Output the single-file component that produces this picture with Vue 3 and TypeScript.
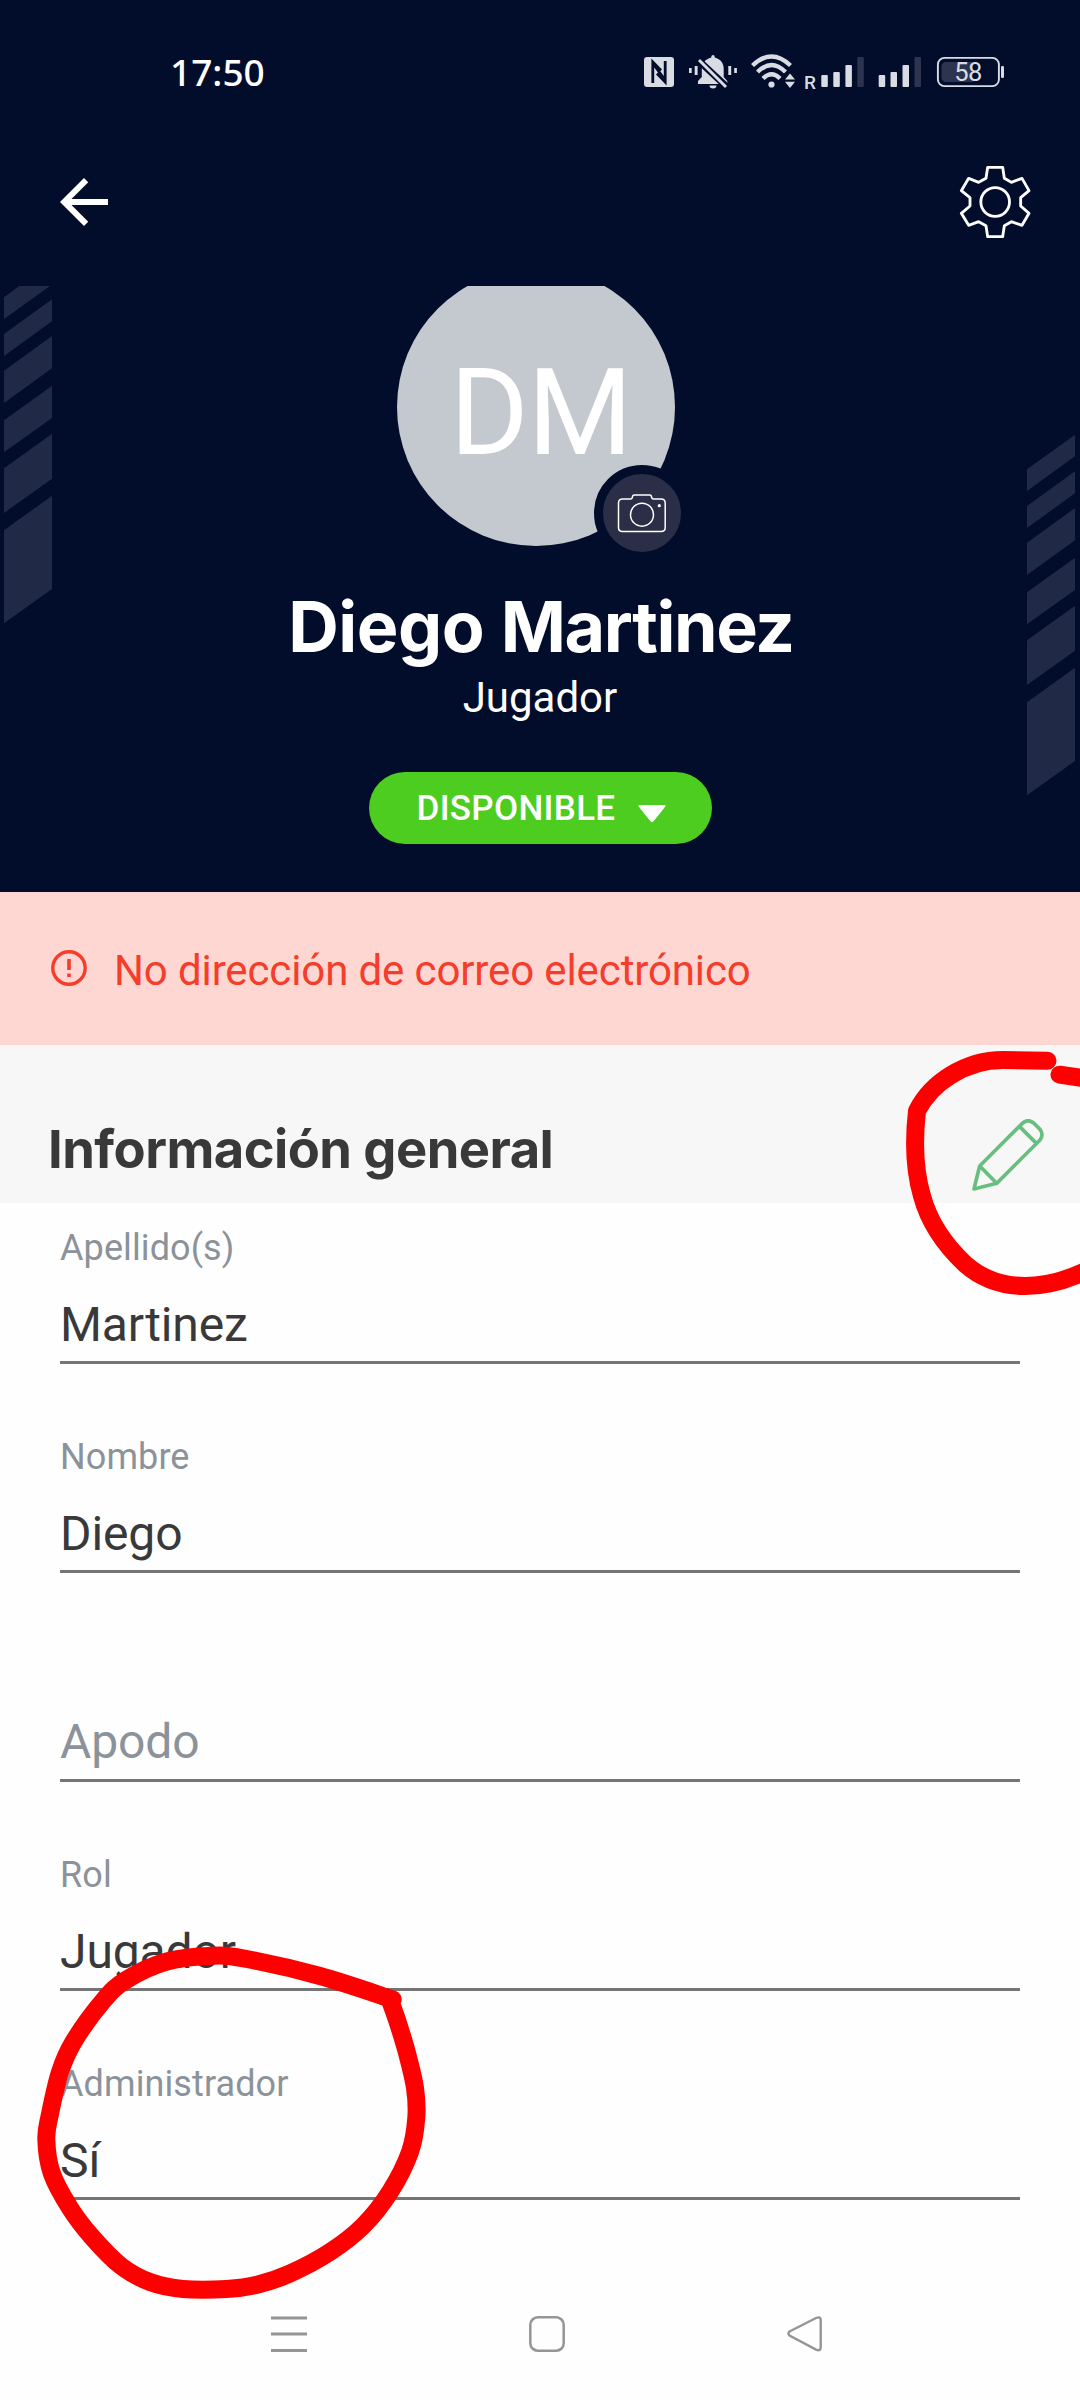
<script setup lang="ts">
interface Field {
  label: string
  value: string
}

type Point = [number, number]

const fields: Field[] = [
  { label: 'Apellido(s)', value: 'Martinez' },
  { label: 'Nombre', value: 'Diego' },
  { label: 'Apodo', value: '' },
  { label: 'Rol', value: 'Jugador' },
  { label: 'Administrador', value: 'Sí' },
]

// Smooth curve through a list of points
function smooth(pts: Point[]): string {
  let d = `M${pts[0][0]} ${pts[0][1]}`
  for (let i = 0; i < pts.length - 1; i++) {
    const a = pts[Math.max(i - 1, 0)]
    const b = pts[i]
    const c = pts[i + 1]
    const e = pts[Math.min(i + 2, pts.length - 1)]
    d += `C${b[0] + (c[0] - a[0]) / 6} ${b[1] + (c[1] - a[1]) / 6} ${c[0] - (e[0] - b[0]) / 6} ${c[1] - (e[1] - b[1]) / 6} ${c[0]} ${c[1]}`
  }
  return d
}

const marks: string[] = [
  'M1047.5 1060.8L1003 1060C965 1060 931 1083 917 1111C913 1146 915 1172 922 1196C929 1222 946 1246 965 1264C982 1279 1003 1286 1025 1286C1047 1286 1068 1280 1090 1269',
  'M1059.5 1074.7L1090 1079',
  smooth([[392.7, 1999.3], [320, 1976], [246.7, 1959], [213, 1955.7], [166.7, 1961.5], [126, 1980], [103, 2001], [74, 2041], [60, 2072], [50, 2114], [46.3, 2139], [51.7, 2173], [70, 2208], [92, 2237], [121, 2266], [150, 2282], [183, 2289], [226.7, 2289], [258, 2284.5], [290, 2273.5], [330, 2252], [363, 2226], [390, 2192], [410, 2152], [416.3, 2118], [415, 2088], [407, 2053], [398, 2023], [391, 2003]]),
]
</script>

<template>
  <div class="screen">
    <header class="top">
      <div class="status">
        <span class="time">17:50</span>
        <div class="tray">
          <svg class="tray-icons" width="364" height="40" viewBox="640 52 364 40">
            <g fill="#dadce4">
              <rect x="644" y="57" width="30" height="30" rx="3" />
              <path d="M689 68h2.700v5h-2.700zM694.700 66h2.900v9h-2.900zM728.300 66h2.900v9h-2.900zM734.200 68h2.700v5h-2.700z" />
              <path d="M711.300 57.500V56.800a1.700 1.700 0 0 1 3.400 0v.7c6 1.500 9 6 9 11.500v8l3.600 4v3H698v-3l3.800-4v-8c0-5.500 3.500-10 9.500-11.500z" />
              <path d="M709.500 85.500h7a3.500 3 0 0 1-7 0z" />
              <circle cx="771.500" cy="84.500" r="3.100" />
              <path d="M785 79.500l5-6 5 6zM785 81.700h10l-5 6.300z" />
              <rect x="821.3" y="75" width="6.500" height="12" rx="1" />
              <rect x="833.3" y="72" width="6.500" height="15" rx="1" />
              <rect x="845.4" y="65" width="6.500" height="22" rx="1" />
              <rect x="878.7" y="75" width="6.500" height="12" rx="1" />
              <rect x="890.5" y="72" width="6.500" height="15" rx="1" />
              <rect x="902.5" y="65" width="6.500" height="22" rx="1" />
              <rect x="1001" y="66" width="3" height="12" rx="1.300" />
            </g>
            <g fill="#2c3450">
              <rect x="857.3" y="57" width="6.500" height="30" rx="1" />
              <rect x="914.5" y="57" width="6.500" height="30" rx="1" />
              <path d="M946 62h27v20h-27a4.500 4.500 0 0 1-4.500-4.500v-11a4.500 4.500 0 0 1 4.500-4.500z" />
            </g>
            <g fill="none" stroke="#020d2b">
              <path d="M652.800 83V62L661 70.500M665.200 61V82L657 73.500M653 63.500L665 80" stroke-width="2.800" />
              <path d="M697.500 59.500L727.500 87.500" stroke-width="7" />
            </g>
            <g fill="none" stroke="#dadce4">
              <path d="M699 60L726 87" stroke-width="3" />
              <path d="M752.500 65.500Q771.500 47.500 790.500 65.500M757.500 72Q771.500 58 785.500 72M763 78.500Q771.500 70 780 78.500" stroke-width="4.300" />
              <rect x="937.9" y="57.900" width="61" height="28.200" rx="6.500" stroke-width="1.900" />
            </g>
            <text x="804" y="88.500" class="roaming">R</text>
            <text x="968" y="81" text-anchor="middle" class="battery">58</text>
          </svg>
        </div>
      </div>
      <div class="toolbar">
        <svg class="back" width="72" height="72" viewBox="0 0 24 24">
          <path fill="#fff" d="M20 11H7.830l5.590-5.590L12 4l-8 8 8 8 1.410-1.410L7.830 13H20z" />
        </svg>
        <svg width="72" height="74" viewBox="176 105 216 222" fill="none" stroke="#fff" stroke-width="8.500" stroke-linejoin="round">
          <path d="M262 112H307L312 145L333 157L365 145L386 182L361 203V228L386 250L365 286L333 275L312 287L307 320H262L257 287L235 275L205 286L183 250L209 228V203L183 182L205 145L235 157L257 145Z" />
          <circle cx="284.500" cy="216" r="43" />
        </svg>
      </div>
    </header>

    <section class="hero">
      <svg v-for="side in ['left', 'right']" :key="side" class="stripes" :class="side" width="48" height="338" viewBox="12 48 144 1014">
        <path
          fill="#202946"
          :d="(side === 'left' ? 'M12 82L58 48H150L12 147Z' : 'M12 82L156 -22V43L12 147Z') +
            'M12 192L156 88V154L12 258ZM12 302L156 198V295L12 399ZM12 451L156 347V444L12 547ZM12 595L156 491V626L12 729ZM12 781L156 677V957L12 1060Z'"
        />
      </svg>
      <div class="avatar">
        <span>DM</span>
        <button class="camera" aria-label="Cambiar foto">
          <svg width="50" height="40" viewBox="0 0 50 40" fill="none" stroke="#fff" stroke-width="1.500" stroke-linejoin="round">
            <path d="M5 6H13.500Q15 6 15.300 4.500L15.700 3Q16 2 17 2H33Q34 2 34.300 3L34.700 4.500Q35 6 36.500 6H44Q48.200 6 48.200 10V34.500Q48.200 38.500 44 38.500H5.500Q1.500 38.500 1.500 34.500V10Q1.500 6 5.500 6Z" />
            <circle cx="25" cy="21.700" r="11.500" />
            <circle cx="42.300" cy="12.700" r="1.600" fill="#fff" stroke="none" />
          </svg>
        </button>
      </div>
      <h1><span class="first">Diego</span> <span class="last">Martinez</span></h1>
      <p class="role">Jugador</p>
      <button class="pill">
        <span>DISPONIBLE</span>
        <svg width="28" height="18" viewBox="0 0 28 18"><path fill="#fff" d="M1.500 0H26.500Q28.500 0 27 2L15.300 16.500Q14 18 12.700 16.500L1 2Q-.5 0 1.500 0Z" /></svg>
      </button>
    </section>

    <div class="alert">
      <svg width="36" height="36" viewBox="0 0 36 36" fill="none" stroke="#f63c2a" stroke-width="3.400">
        <circle cx="18" cy="18" r="16.200" />
        <path d="M18 9V20M18 23.500V27" stroke-width="3.600" />
      </svg>
      <span>No dirección de correo electrónico</span>
    </div>

    <div class="section-head">
      <h2>Información general</h2>
      <svg width="72" height="72" viewBox="276 267 216 216" fill="none" stroke="#67bf7f" stroke-width="11" stroke-linejoin="round" stroke-linecap="round">
        <path d="M299 408L427 280Q444 265 461 279L480 298Q492 313 480 330L350 460L282 477ZM299 408L350 460M419 290L467 338" />
      </svg>
    </div>

    <main class="form">
      <div v-for="f in fields" :key="f.label" class="field">
        <label>{{ f.value ? f.label : '' }}</label>
        <div class="value" :class="{ empty: !f.value }">{{ f.value || f.label }}</div>
      </div>
    </main>

    <nav class="navbar">
      <svg width="36" height="36" viewBox="0 0 36 36"><path d="M0 2H36M0 18H36M0 34.500H36" stroke="#959595" stroke-width="3" /></svg>
      <svg width="36" height="36" viewBox="0 0 36 36"><rect x="1.300" y="1.300" width="33.400" height="33.400" rx="7.500" fill="none" stroke="#959595" stroke-width="2.500" /></svg>
      <svg width="36" height="36" viewBox="0 0 36 36"><path d="M2.500 15.500L29.500 1.800Q33.700 .3 33.700 4V31.500Q33.700 35.200 29.500 33.800L2.500 19.500Q.3 17.500 2.500 15.500Z" fill="none" stroke="#959595" stroke-width="2.400" /></svg>
    </nav>

    <svg class="marks" width="1080" height="2400" viewBox="0 0 1080 2400" fill="none" stroke="#fe0000" stroke-width="18" stroke-linecap="round" stroke-linejoin="round">
      <path v-for="(d, i) in marks" :key="i" :d="d" />
    </svg>
  </div>
</template>

<style>
body {
  margin: 0;
  background: #fefefe;
}
</style>

<style scoped>
.screen {
  position: relative;
  width: 1080px;
  height: 2400px;
  overflow: hidden;
  background: #fefefe;
  font-family: Roboto, "Liberation Sans", sans-serif;
  display: flex;
  flex-direction: column;
}
.screen > * {
  flex-shrink: 0;
}
svg {
  display: block;
}
h1,
h2,
p {
  margin: 0;
}
button {
  border: 0;
  padding: 0;
  font: inherit;
  color: inherit;
}
.top {
  height: 286px;
  background: #020d2b;
  color: #fff;
}
.status {
  display: flex;
  justify-content: space-between;
  padding: 50px 76px 0 170px;
  height: 44px;
}
.time {
  font: 500 37px/44px "Noto Sans", sans-serif;
  white-space: nowrap;
}
.tray {
  padding-top: 2px;
}
.roaming {
  font: 500 19px Roboto, sans-serif;
  fill: #dadce4;
}
.battery {
  font: 400 25.500px Roboto, sans-serif;
  letter-spacing: -0.500px;
  fill: #dadce4;
}
.toolbar {
  display: flex;
  justify-content: space-between;
  margin-top: 71px;
  padding: 0 49.500px 0 48px;
}
.back {
  margin-top: 1px;
}
.hero {
  position: relative;
  height: 606px;
  overflow: hidden;
  background: #020d2b;
  color: #fff;
  display: flex;
  flex-direction: column;
  align-items: center;
}
.stripes {
  position: absolute;
  overflow: visible;
}
.left {
  left: 4px;
  top: 0;
}
.right {
  right: 5px;
  top: 172px;
}
.avatar {
  position: relative;
  box-sizing: border-box;
  width: 278px;
  height: 278px;
  flex-shrink: 0;
  margin: -18px 8px 0 0;
  padding: 11px 0 0 9px;
  border-radius: 50%;
  background: #c4c8cf;
  display: flex;
  align-items: center;
  justify-content: center;
  font-size: 120.500px;
  letter-spacing: -1.500px;
}
.camera {
  position: absolute;
  left: 197px;
  top: 197px;
  width: 96px;
  height: 96px;
  box-sizing: border-box;
  border: 9px solid #020d2b;
  border-radius: 50%;
  background: #2a2f47;
  display: flex;
  align-items: center;
  justify-content: center;
}
h1 {
  margin: 39px 0 0 2px;
  font: 700 70px/84px Inter, sans-serif;
  white-space: nowrap;
}
.first {
  letter-spacing: -0.500px;
}
.last {
  letter-spacing: -1.400px;
}
.role {
  margin-top: 4px;
  font-size: 42px;
  line-height: 50px;
}
.pill {
  display: flex;
  align-items: center;
  justify-content: space-between;
  box-sizing: border-box;
  width: 343px;
  height: 72px;
  margin-top: 49px;
  padding: 0 46px 0 48px;
  border-radius: 36px;
  background: #4dcd20;
  font-size: 35px;
  font-weight: 500;
  letter-spacing: 0.300px;
}
.pill svg {
  margin-top: 11px;
}
.alert {
  box-sizing: border-box;
  height: 153px;
  padding: 0 0 0 51px;
  display: flex;
  align-items: center;
  gap: 27px;
  background: #fed7d2;
  color: #f63c2a;
  font-size: 42px;
  letter-spacing: -0.120px;
}
.alert svg {
  margin-bottom: 2px;
}
.alert span {
  padding-top: 4px;
}
.section-head {
  box-sizing: border-box;
  height: 158px;
  padding: 74px 36px 0 48px;
  display: flex;
  justify-content: space-between;
  background: #f7f7f7;
}
h2 {
  font: 700 52.500px/60px Inter, sans-serif;
  letter-spacing: -0.550px;
  color: #393939;
  white-space: nowrap;
}
.form {
  padding: 0 60px;
  display: flex;
  flex-direction: column;
  gap: 48px;
}
.field {
  padding: 24px 0 8px;
  border-bottom: 3px solid #757575;
}
label {
  display: block;
  height: 42px;
  font-size: 36px;
  line-height: 42px;
  letter-spacing: 0.100px;
  color: #8b9299;
}
.value {
  height: 56px;
  margin-top: 28px;
  font-size: 48px;
  line-height: 56px;
  letter-spacing: -0.100px;
  color: #393939;
}
.empty {
  line-height: 53px;
  color: #8b9299;
}
.navbar {
  margin-top: 116px;
  padding-left: 271px;
  display: flex;
  gap: 222px;
}
.marks {
  position: absolute;
  left: 0;
  top: 0;
  pointer-events: none;
}
</style>
